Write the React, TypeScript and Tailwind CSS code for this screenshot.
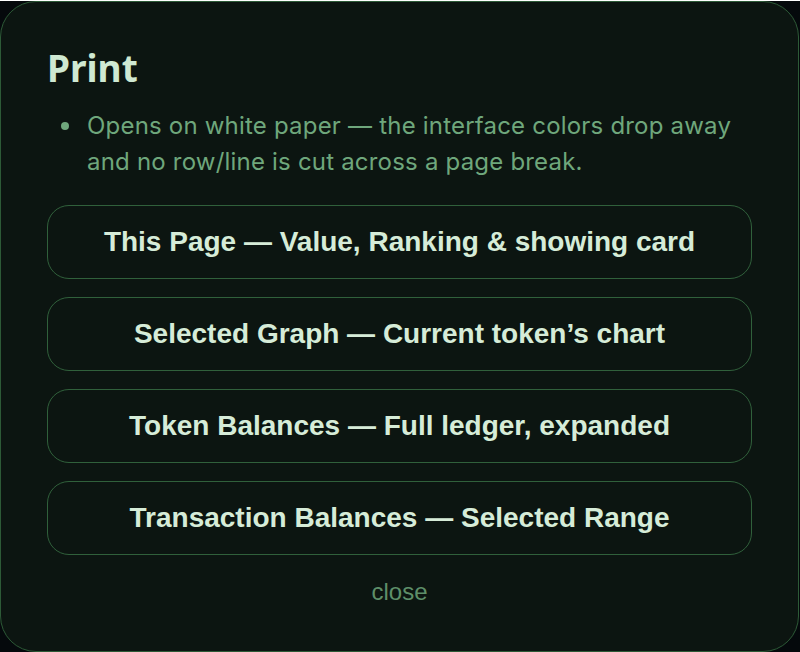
import React from 'react';

const options = [
  'This Page — Value, Ranking & showing card',
  'Selected Graph — Current token’s chart',
  'Token Balances — Full ledger, expanded',
  'Transaction Balances — Selected Range',
];

export default function App() {
  return (
    <div className="min-h-screen w-full bg-[#05090c]">
      <div className="mt-px flex h-[651px] w-[799px] flex-col rounded-[36px] border-[1.5px] border-[#2d5a37] bg-[#0c1511] px-[46px] pt-[40px]">
        {/* Heading */}
        <h2 className="font-['Noto_Sans',sans-serif] text-[37px] font-bold leading-[52px] text-[#cfe9d2]">
          Print
        </h2>

        {/* Note */}
        <ul className="mt-[14px] pl-[40px] font-['Inter',sans-serif] text-[24px] leading-[36px] tracking-[0.2px] text-[#6fa77c]">
          <li className="relative">
            <span className="absolute -left-[26px] top-[14px] h-[8px] w-[8px] rounded-full bg-[#6fa77c]" />
            Opens on white paper — the interface colors drop away and no row/line is cut across a page break.
          </li>
        </ul>

        {/* Print targets */}
        <div className="mt-[25px] flex flex-col gap-[18px]">
          {options.map((label) => (
            <button
              key={label}
              className="flex h-[74px] w-full items-center justify-center rounded-[22px] border-[1.5px] border-[#30603b] bg-transparent font-['Liberation_Sans',Arial,sans-serif] text-[28px] font-bold text-[#d6ecd8]"
            >
              {label}
            </button>
          ))}
        </div>

        <button className="mt-[21px] self-center font-['Liberation_Sans',Arial,sans-serif] text-[24px] leading-[32px] text-[#5e8f69]">
          close
        </button>
      </div>
    </div>
  );
}
